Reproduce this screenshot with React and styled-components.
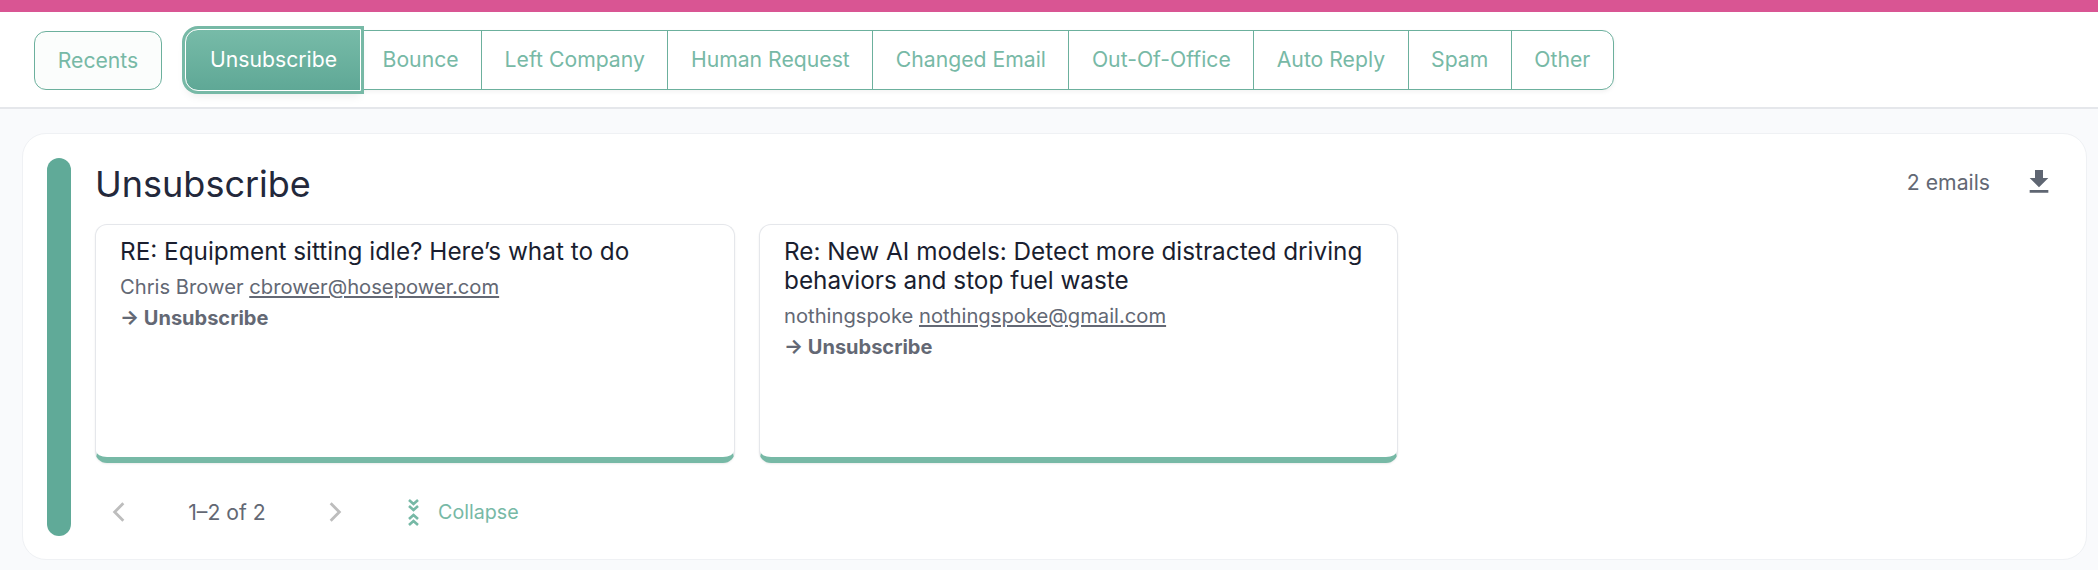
import React from "react";
import styled, { createGlobalStyle } from "styled-components";

const Global = createGlobalStyle`
  html, body { margin: 0; padding: 0; background: #f9fafc; }
  body { font-family: Inter, "Liberation Sans", sans-serif; }
  * { box-sizing: border-box; }
`;
const green = "#77b9a6";
const line = "#6cb09d";
const Page = styled.div`width: 2098px; height: 570px; overflow: hidden; background: #f9fafc;`;
const TopBar = styled.div`height: 12px; background: #d95593;`;
const Header = styled.header`
  height: 97px; background: #fff; border-bottom: 2px solid #e5e7eb;
  display: flex; align-items: flex-start; padding: 18px 0 0 34px;
`;
const Recents = styled.button`
  width: 128px; height: 59px; margin: 1px 24px 0 0; padding: 0 0 2px; cursor: pointer;
  border: 1px solid ${line}; border-radius: 12px; background: #fbfdfc;
  color: ${green}; font: 400 21.2px Inter, sans-serif;
`;
const TabGroup = styled.div`
  display: flex; height: 60px; border: 1px solid ${line}; border-radius: 12px;
  box-shadow: 0 2px 4px rgba(0,0,0,.05); background: #fff;
`;
const Tab = styled.button`
  height: 100%; padding: 0 22.5px 2px; cursor: pointer; border: 0; background: transparent;
  border-right: 1px solid ${line}; color: ${green}; font: 400 21.2px Inter, sans-serif;
  &:last-child { border-right: 0; border-radius: 0 12px 12px 0; }
`;
const ActiveTab = styled(Tab)`
  position: relative; z-index: 1; color: #fff; border: 0; padding: 0 23px 2px 24px;
  height: 60px; margin: -1px 0 -1px -1px;
  background: linear-gradient(#77bba8, #5fa896);
  border-radius: 12px 0 0 12px;
  outline: 1px solid #fff; outline-offset: 0;
  box-shadow: 0 0 0 4px ${green}, 0 6px 10px rgba(0,0,0,.08);
`;
const Section = styled.section`
  margin: 24px 11px 0 22px; height: 427px; background: #fff;
  border: 1px solid #eff1f4; border-radius: 24px;
  display: flex; gap: 24px; padding: 24px 31px 23px 24px;
`;
const Rail = styled.div`width: 24px; flex: none; background: #60aa98; border-radius: 12px;`;
const Content = styled.div`flex: 1; min-width: 0; display: flex; flex-direction: column;`;
const TitleRow = styled.div`display: flex; justify-content: space-between; align-items: flex-start; height: 67px;`;
const Title = styled.h2`margin: 0; font-size: 36px; font-weight: 400; line-height: 52px; color: #23283b;`;
const Meta = styled.div`display: flex; align-items: center; gap: 33px; height: 46px; color: #636874; font-size: 21.2px; padding-top: 1px;`;
const DownloadIcon = styled.svg`width: 32px; height: 32px; fill: #5f6672; display: block;`;
const Cards = styled.div`display: grid; grid-template-columns: 640px 639px 639px; gap: 24px;`;
const Card = styled.article`
  height: 239px; background: #fff; border: 1px solid #e5e7eb; border-radius: 12px;
  border-bottom: 6px solid ${green}; padding: 12px 24px;
  box-shadow: 0 1px 2px rgba(0,0,0,.08);
`;
const Subject = styled.h3`margin: 0 0 6px; font-size: 24.3px; line-height: 29px; font-weight: 400; color: #1a1e2f;`;
const Sender = styled.p`margin: 0 0 4px; font-size: 20.2px; line-height: 30px; color: #636874;`;
const Mail = styled.a`color: #636874; text-decoration: underline;`;
const Action = styled.p`margin: 0; font-size: 20px; line-height: 24px; font-weight: 700; color: #636874;`;
const Footer = styled.div`display: flex; align-items: center; height: 48px; margin-top: 25px;`;
const Pager = styled.button`
  width: 32px; height: 32px; padding: 0; border: 0; background: transparent; color: #bdbdbd;
  display: flex; align-items: center; justify-content: center; margin-left: ${p => p.$ml || 0}px;
`;
const Count = styled.span`width: 184px; text-align: center; font-size: 21.2px; color: #636874;`;
const Collapse = styled.button`
  display: flex; align-items: center; gap: 19px; border: 0; background: transparent; padding: 0;
  margin-left: 57px; color: ${green}; font: 400 19.7px Inter, sans-serif;
`;

const tabs = ["Bounce", "Left Company", "Human Request", "Changed Email", "Out-Of-Office", "Auto Reply", "Spam", "Other"];
const emails = [
  { subject: "RE: Equipment sitting idle? Here’s what to do", name: "Chris Brower", mail: "cbrower@hosepower.com" },
  { subject: "Re: New AI models: Detect more distracted driving behaviors and stop fuel waste", name: "nothingspoke", mail: "nothingspoke@gmail.com" },
];

const Chevron = ({ d }) => (
  <svg width="26" height="26" viewBox="0 0 24 24" fill="none" stroke="currentColor" strokeWidth="2.6" strokeLinejoin="miter"><path d={d} /></svg>
);

export default function App() {
  return (
    <Page>
      <Global />
      <TopBar />
      <Header>
        <Recents>Recents</Recents>
        <TabGroup>
          <ActiveTab>Unsubscribe</ActiveTab>
          {tabs.map(t => <Tab key={t}>{t}</Tab>)}
        </TabGroup>
      </Header>
      <Section>
        <Rail />
        <Content>
          <TitleRow>
            <Title>Unsubscribe</Title>
            <Meta>
              <span>2 emails</span>
              <DownloadIcon viewBox="0 0 24 24"><path d="M19 9h-4V3H9v6H5l7 7 7-7zM5 18v2h14v-2H5z" /></DownloadIcon>
            </Meta>
          </TitleRow>
          <Cards>
            {emails.map(e => (
              <Card key={e.mail}>
                <Subject>{e.subject}</Subject>
                <Sender>{e.name} <Mail>{e.mail}</Mail></Sender>
                <Action>→ Unsubscribe</Action>
              </Card>
            ))}
          </Cards>
          <Footer>
            <Pager $ml={8}><Chevron d="M16 4l-8 8 8 8" /></Pager>
            <Count>1–2 of 2</Count>
            <Pager><Chevron d="M8 4l8 8-8 8" /></Pager>
            <Collapse>
              <svg width="11" height="27" viewBox="0 0 11 27" fill="none" stroke={green} strokeWidth="2.6">
                <path d="M1 1l4.5 4 4.5-4M1 7l4.5 4 4.5-4M1 20l4.5-4 4.5 4M1 26l4.5-4 4.5 4" />
              </svg>
              Collapse
            </Collapse>
          </Footer>
        </Content>
      </Section>
    </Page>
  );
}
